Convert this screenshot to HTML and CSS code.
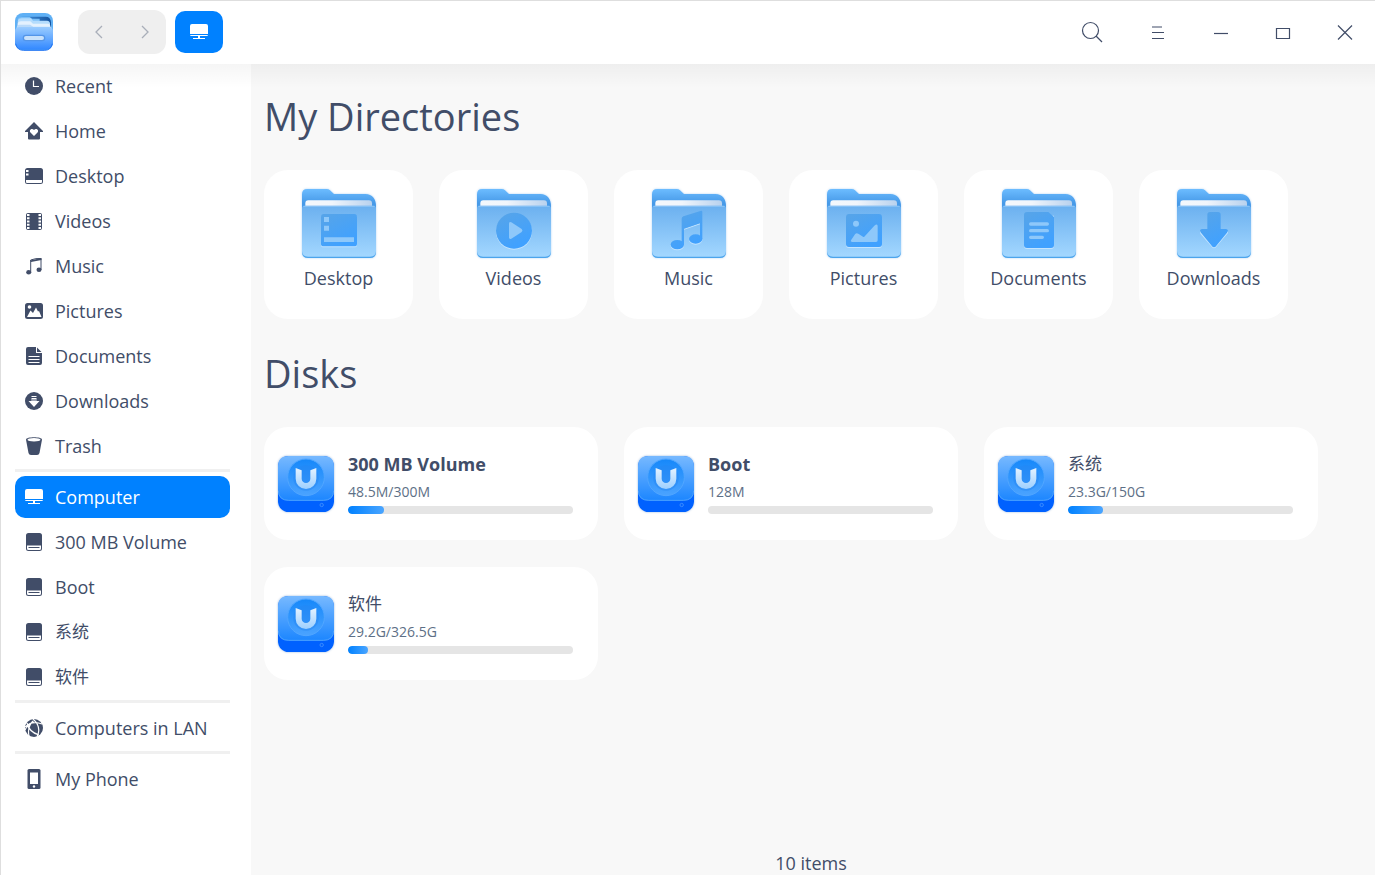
FILE: index.html
```html
<!DOCTYPE html>
<html lang="en">
<head>
<meta charset="utf-8">
<meta name="viewport" content="width=device-width, initial-scale=1">
<title>Computer</title>
<link rel="stylesheet" href="styles.css">
</head>
<body>
<svg class="defs" aria-hidden="true">
  <defs>
    <linearGradient id="back" x1="0" y1="0" x2="0" y2="1"><stop offset="0" stop-color="#6cbcff"/><stop offset=".6" stop-color="#479ae8"/><stop offset="1" stop-color="#479ae8"/></linearGradient>
    <linearGradient id="front" x1="0" y1="0" x2="0" y2="1"><stop offset="0" stop-color="#6bb0ef"/><stop offset="1" stop-color="#a3d7ff"/></linearGradient>
    <linearGradient id="paper" x1="0" y1="0" x2="1" y2="0"><stop offset="0" stop-color="#f4f8fc"/><stop offset=".4" stop-color="#f0f5fb"/><stop offset="1" stop-color="#b9d2ee"/></linearGradient>
    <linearGradient id="mark" gradientUnits="userSpaceOnUse" x1="85" y1="75" x2="130" y2="165"><stop offset="0" stop-color="#55a4ea"/><stop offset="1" stop-color="#40a1ff"/></linearGradient>
    <linearGradient id="lid" x1="0" y1="0" x2="0" y2="1"><stop offset="0" stop-color="#77b9ff"/><stop offset="1" stop-color="#1c86ff"/></linearGradient>
    <linearGradient id="dial" x1="0" y1="0" x2="0" y2="1"><stop offset="0" stop-color="#1688fa"/><stop offset="1" stop-color="#4ba3ff"/></linearGradient>
    <linearGradient id="emblem" gradientUnits="userSpaceOnUse" x1="0" y1="36" x2="0" y2="100"><stop offset="0" stop-color="#e4f2ff"/><stop offset="1" stop-color="#9ccfff"/></linearGradient>
    <linearGradient id="drawer" x1="0" y1="0" x2="0" y2="1"><stop offset="0" stop-color="#9accff"/><stop offset="1" stop-color="#3288ff"/></linearGradient>
    <linearGradient id="inside" x1="0" y1="0" x2="1" y2="0"><stop offset="0" stop-color="#4a9ce8"/><stop offset="1" stop-color="#15549f"/></linearGradient>
    <symbol id="folder" viewBox="0 0 222 207">
      <path fill="url(#back)" d="M0 70V16Q0 0 16 0H74Q80 0 84 4L96 15H190Q222 17 222 52V70Z"/>
      <rect x="10" y="34" width="200" height="34" rx="9" fill="url(#paper)"/>
      <path fill="#4ba4ec" d="M0 60H222V189Q222 207 204 207H18Q0 207 0 189Z"/>
      <path fill="url(#front)" d="M0 58Q0 50 8 50H214Q222 50 222 58V186Q222 203 204 203H18Q0 203 0 186Z"/>
      <path d="M4 52H218" stroke="#8cc4f6" stroke-width="3"/>
    </symbol>
    <symbol id="disk" viewBox="0 0 168 168">
      <rect width="168" height="168" rx="32" fill="#0061ff"/>
      <path fill="url(#lid)" d="M0 32Q0 0 32 0H136Q168 0 168 32V102Q168 134 136 134H32Q0 134 0 102Z"/>
      <path fill="none" stroke="#4aa0ff" stroke-width="3" d="M1 104Q2 133 32 133H136Q166 133 167 104"/>
      <circle cx="84" cy="64" r="55" fill="url(#dial)" stroke="#50a6ff" stroke-width="3"/>
      <circle cx="84" cy="66" r="38" fill="#2384f2" opacity=".45"/>
      <path fill="url(#emblem)" d="M53 36 71 43V68A13 13 0 0 0 97 68V43L115 36V68A31 31 0 0 1 53 68Z"/>
      <circle cx="131" cy="147" r="5" fill="none" stroke="#3a8cff" stroke-width="3"/>
    </symbol>
    <symbol id="i-drive" viewBox="0 0 18 18"><path fill-rule="evenodd" d="M3.500 0H14.500Q17 0 17 2.500V15.500Q17 18 14.500 18H3.500Q1 18 1 15.500V2.500Q1 0 3.500 0ZM2 12.500V15.500Q2 17 3.500 17H14.500Q16 17 16 15.500V12.500Z"/><rect x="3.500" y="14" width="11" height="1"/></symbol>
    <symbol id="i-computer" viewBox="0 0 18 18"><path d="M2 1H16Q18 1 18 3V11H0V3Q0 1 2 1ZM0 12H18Q18 13 16.500 13H1.500Q0 13 0 12ZM8 13H10V15H15V16H3V15H8Z"/></symbol>
  </defs>
</svg>
<div class="window">
  <header class="titlebar">
    <svg class="app-logo" viewBox="0 0 114 114" aria-hidden="true">
      <rect width="114" height="112" rx="24" fill="#5fb0f5"/>
      <path fill="url(#inside)" d="M6 28Q8 11 24 11H92Q107 11 108 28V60H6Z"/>
      <path fill="#7cc0f8" d="M8 54V20Q9 12 20 12H44L51 17H74V54Z"/>
      <path fill="#b4dcfd" d="M8 56V26Q9 16 20 16H48L54 23H96Q104 23 105 31V56Z"/>
      <path fill="#e3f1fe" d="M8 60V34Q8 25 18 25H46L54 32H98Q106 32 106 40V60Z"/>
      <path fill="#b9dafa" d="M5 60V44Q5 36 14 35H45L55 41H109V60Z"/>
      <path fill="url(#drawer)" d="M0 56Q0 42 14 42H100Q114 42 114 56V88Q114 110 90 110H24Q0 110 0 88Z"/>
      <path fill="none" stroke="#2375f2" stroke-width="3" d="M2 92Q6 112 26 112H88Q108 112 112 92"/>
      <rect x="25" y="67" width="64" height="16" rx="8" fill="#c8e1fb" stroke="#5395e8" stroke-width="4"/>
    </svg>
    <nav class="history" aria-label="History">
      <button type="button" aria-label="Back"><svg viewBox="0 0 8 14"><path d="M7 1 1 7l6 6"/></svg></button>
      <button type="button" aria-label="Forward"><svg viewBox="0 0 8 14"><path d="m1 1 6 6-6 6"/></svg></button>
    </nav>
    <button class="location" type="button" aria-label="Computer"><svg><use href="#i-computer"/></svg></button>
    <div class="controls">
      <button class="search" type="button" aria-label="Search"><svg viewBox="0 0 20 20"><circle cx="8.500" cy="8.500" r="8"/><path d="m14 14 6 6"/></svg></button>
      <button type="button" aria-label="Menu"><svg viewBox="0 0 20 20"><path d="M4 5h10M4 10.500h12M4 16.500h12"/></svg></button>
      <button type="button" aria-label="Minimize"><svg viewBox="0 0 20 20"><path d="M4 11.500h14"/></svg></button>
      <button type="button" aria-label="Maximize"><svg viewBox="0 0 20 20"><path d="M4.500 6.500h13v10h-13z"/></svg></button>
      <button type="button" aria-label="Close"><svg viewBox="0 0 20 20"><path d="m4 3.500 14 14M18 3.500l-14 14"/></svg></button>
    </div>
  </header>
  <div class="body">
    <nav class="sidebar" aria-label="Places">
      <a href="#"><svg viewBox="0 0 18 18"><circle cx="9" cy="9" r="9"/><path class="cut" d="M8.500 3.500V9.500H14"/></svg>Recent</a>
      <a href="#"><svg viewBox="0 0 18 18"><path d="M9 0 18 9V10H15V16.500Q15 17.500 14 17.500H4Q3 17.500 3 16.500V10H0V9Z"/><path class="hole" d="M9 14 5.500 10.500C3.500 8 7 5.500 9 8 11 5.500 14.500 8 12.500 10.500Z"/></svg>Home</a>
      <a href="#"><svg viewBox="0 0 18 18"><rect y="1" width="18" height="16" rx="2.500"/><path class="hole" d="M1 3H3.500V5H1ZM1 6.500H3.500V8.500H1ZM1 13H17V15Q17 16 16 16H2Q1 16 1 15Z"/></svg>Desktop</a>
      <a href="#"><svg viewBox="0 0 18 18"><rect x="1" y="1" width="16" height="17" rx="2"/><path class="hole" d="M2 2H4.500V4H2ZM2 5.250H4.500V7.250H2ZM2 8.500H4.500V10.500H2ZM2 11.750H4.500V13.750H2ZM2 15H4.500V17H2ZM13.500 2H16V4H13.500ZM13.500 5.250H16V7.250H13.500ZM13.500 8.500H16V10.500H13.500ZM13.500 11.750H16V13.750H13.500ZM13.500 15H16V17H13.500Z"/></svg>Videos</a>
      <a href="#"><svg viewBox="0 0 18 18"><ellipse cx="3.700" cy="15.200" rx="2.500" ry="2.300"/><ellipse cx="14" cy="12.700" rx="2.500" ry="2.300"/><path class="line" d="M5.700 15.500V3Q11 1 16 1.500V13"/><path d="M5 3.500 16.500 1V3L6 5Z"/></svg>Music</a>
      <a href="#"><svg viewBox="0 0 18 18"><rect y="1" width="18" height="16" rx="2.500"/><circle class="hole" cx="4.500" cy="5" r="1.800"/><path class="hole" d="M2 15 5.500 8.500 8 11 11 5.500 13 9.500 14 9 16.500 15Z"/></svg>Pictures</a>
      <a href="#"><svg viewBox="0 0 18 18"><path d="M3 0H11V6H17V16Q17 18 15 18H3Q1 18 1 16V2Q1 0 3 0ZM12 .500 16.500 5H12Z"/><path class="cut" d="M3.500 9.500H14.500M3.500 12.500H14.500M3.500 15.500H14.500"/></svg>Documents</a>
      <a href="#"><svg viewBox="0 0 18 18"><circle cx="9" cy="9" r="9"/><path class="hole" d="M6.500 4H11.500V5H6.500ZM6.500 6H11.500V9H14.500L9 15 3.500 9H6.500Z"/><path d="M6.500 7.500H11.500V8.500H6.500Z"/></svg>Downloads</a>
      <a href="#"><svg viewBox="0 0 18 18"><path d="M1 2.500C1-.5 17-.5 17 2.500L14.500 16Q14 18 12 18H6Q4 18 3.500 16Z"/><ellipse class="hole" cx="9" cy="2.800" rx="6.500" ry="1.700"/></svg>Trash</a>
      <hr>
      <a class="current" href="#" aria-current="page"><svg><use href="#i-computer"/></svg>Computer</a>
      <a href="#"><svg><use href="#i-drive"/></svg>300 MB Volume</a>
      <a href="#"><svg><use href="#i-drive"/></svg>Boot</a>
      <a href="#" lang="zh"><svg><use href="#i-drive"/></svg>系统</a>
      <a href="#" lang="zh"><svg><use href="#i-drive"/></svg>软件</a>
      <hr>
      <a href="#"><svg viewBox="0 0 18 18"><circle cx="9" cy="9" r="9"/><path class="cut" d="M8 0Q17 8 12 18M0 8Q7 1 17 5M2 4Q4 13 14 16M8 2Q2 8 4 17M0 11Q3 5 9 3"/></svg>Computers in LAN</a>
      <hr>
      <a href="#"><svg viewBox="0 0 18 20" class="tall"><rect x="2.500" width="13" height="20" rx="1.500"/><path class="hole" d="M5 3.500H13V15H5Z"/><circle class="hole" cx="9" cy="17.500" r="1.200"/></svg>My Phone</a>
    </nav>
    <main class="content">
      <h1>My Directories</h1>
      <div class="folders">
        <a class="folder" href="#"><svg viewBox="0 0 222 207"><use href="#folder"/><rect class="glow" x="57" y="78" width="108" height="97" rx="8"/><rect class="mark" x="57" y="75" width="108" height="97" rx="8"/><path class="light" d="M66 84H81V99H66ZM66 110H81V125H66ZM66 145H156V159H66Z"/></svg>Desktop</a>
        <a class="folder" href="#"><svg viewBox="0 0 222 207"><use href="#folder"/><circle class="glow" cx="111" cy="128" r="54"/><circle class="mark" cx="111" cy="125" r="54"/><path class="light" d="M96 104Q96 96 103 100L134 120Q139 125 134 129L103 149Q96 152 96 145Z"/></svg>Videos</a>
        <a class="folder" href="#"><svg viewBox="0 0 222 207"><use href="#folder"/><g class="glow"><ellipse cx="76" cy="170" rx="20" ry="14"/><ellipse cx="131" cy="153" rx="20" ry="14"/><path d="M96 122 144 106V103L96 119Z"/></g><g class="mark"><ellipse cx="76" cy="167" rx="20" ry="14"/><ellipse cx="131" cy="150" rx="20" ry="14"/><path d="M89 89Q89 84 94 82L145 66Q151 64 151 69V150H144V103L96 119V167H89Z"/></g></svg>Music</a>
        <a class="folder" href="#"><svg viewBox="0 0 222 207"><use href="#folder"/><rect class="glow" x="57" y="78" width="108" height="99" rx="9"/><rect class="mark" x="57" y="75" width="108" height="99" rx="9"/><path class="light" d="M78 104a9 9 0 1 0 18 0a9 9 0 1 0-18 0ZM72 154 84 136Q88 130 94 134L108 143Q111 145 114 141L142 110Q152 102 152 112V154Q152 159 147 159H75Q69 158 72 154Z"/></svg>Pictures</a>
        <a class="folder" href="#"><svg viewBox="0 0 222 207"><use href="#folder"/><path class="glow" d="M66 80H156V171Q156 180 147 180H75Q66 180 66 171Z"/><path class="mark" d="M75 69H139L156 84V168Q156 177 147 177H75Q66 177 66 168V78Q66 69 75 69Z"/><path class="rule" d="M86 105H136M86 125H136M86 145H121"/></svg>Documents</a>
        <a class="folder" href="#"><svg viewBox="0 0 222 207"><use href="#folder"/><path class="glow" d="M69 127H153V132L118 173Q111 183 104 173L70 134Z"/><path class="mark" d="M99 69H123Q131 69 131 77V120H147Q157 122 150 131L118 170Q111 179 104 170L72 131Q65 122 75 120H91V77Q91 69 99 69Z"/></svg>Downloads</a>
      </div>
      <h1>Disks</h1>
      <div class="disks">
        <a class="disk" href="#"><svg><use href="#disk"/></svg><span class="info"><strong>300 MB Volume</strong><small>48.5M/300M</small><progress value="48.5" max="300" aria-label="300 MB Volume usage"></progress></span></a>
        <a class="disk" href="#"><svg><use href="#disk"/></svg><span class="info"><strong>Boot</strong><small>128M</small><progress value="0" max="128" aria-label="Boot usage"></progress></span></a>
        <a class="disk" href="#"><svg><use href="#disk"/></svg><span class="info"><strong lang="zh">系统</strong><small>23.3G/150G</small><progress value="23.3" max="150" aria-label="系统 usage"></progress></span></a>
        <a class="disk" href="#"><svg><use href="#disk"/></svg><span class="info"><strong lang="zh">软件</strong><small>29.2G/326.5G</small><progress value="29.2" max="326.5" aria-label="软件 usage"></progress></span></a>
      </div>
      <footer class="status">10 items</footer>
    </main>
  </div>
</div>
</body>
</html>
```

FILE: styles.css
```css
* { box-sizing: border-box; }

body {
  margin: 0;
  color: #414d68;
  font: 18px/24px "Open Sans", "Noto Sans CJK SC", sans-serif;
}

a { color: inherit; text-decoration: none; }

button {
  display: flex;
  align-items: center;
  justify-content: center;
  padding: 0;
  border: 0;
  background: none;
  color: inherit;
}

.defs { position: absolute; width: 0; height: 0; }

.window {
  display: flex;
  flex-direction: column;
  min-height: 100vh;
  border-top: 1px solid #dedede;
  border-left: 1px solid #dedede;
  background: #fff;
}

.titlebar {
  display: flex;
  align-items: center;
  height: 63px;
  padding: 0 0 1px 14px;
}

.app-logo { width: 38px; height: 38px; margin-right: 25px; }

.history {
  display: flex;
  width: 88px;
  height: 44px;
  margin-right: 9px;
  padding: 0 20px 0 16px;
  justify-content: space-between;
  border-radius: 12px;
  background: #efefef;
}

.history svg { width: 8px; height: 14px; fill: none; stroke: #a9aeb9; stroke-width: 1.3; }
.history { padding: 0 17px; }

.location { width: 48px; height: 42px; border-radius: 10px; background: #0081ff; }
.location svg { width: 18px; height: 18px; fill: #fff; }

.controls { display: flex; margin-left: auto; }
.controls button { width: 62px; height: 40px; }
.controls .search { margin-right: 4px; }
.controls svg { width: 20px; height: 20px; fill: none; stroke: #414d68; stroke-width: 1.2; overflow: visible; }

.body { display: flex; flex: 1; }

.sidebar {
  display: flex;
  flex-direction: column;
  flex: none;
  width: 250px;
  padding: 1px 21px 24px 14px;
  background: linear-gradient(rgba(0, 0, 0, .04), transparent 24px) #fff;
}

.sidebar a {
  display: flex;
  align-items: center;
  gap: 12px;
  height: 42px;
  padding-left: 10px;
  border-radius: 10px;
}

.sidebar a + a { margin-top: 3px; }
.sidebar hr { width: 100%; height: 3px; margin: 2px 0 4px; border: 0; background: #f0f0f0; }
.sidebar svg { width: 18px; height: 18px; fill: #414d68; }
.sidebar .tall { height: 20px; }
.sidebar .cut { fill: none; stroke: #fff; stroke-width: 1.2; }
.sidebar .hole { fill: #fff; }
.sidebar .line { fill: none; stroke: #414d68; stroke-width: 1; }
.sidebar .current { background: #0081ff; color: #fff; }
.sidebar .current svg { fill: #fff; }
.sidebar a:lang(zh) { font-size: 17px; }

.content {
  display: flex;
  flex-direction: column;
  flex: 1;
  min-width: 0;
  padding-left: 13px;
  background: linear-gradient(rgba(0, 0, 0, .04), transparent 24px) #f8f8f8;
}

h1 { margin: 0; padding: 26px 0 28px; font-size: 38px; font-weight: 400; line-height: 52px; }

.folders, .disks { display: flex; flex-wrap: wrap; gap: 27px 26px; }
.folders { margin-bottom: 2px; }

.folder {
  display: flex;
  flex-direction: column;
  align-items: center;
  gap: 8px;
  width: 149px;
  min-height: 149px;
  padding-top: 19px;
  border-radius: 24px;
  background: #fff;
}

.folder svg { width: 74px; height: 69px; filter: drop-shadow(0 0 1px rgba(70, 150, 230, .4)); }
.folder .mark { fill: url(#mark); }
.folder .glow { fill: #c3e4ff; }
.folder .light { fill: #8ec8fa; }
.folder .rule { fill: none; stroke: #8ec8fa; stroke-width: 10; stroke-linecap: round; }

.disk {
  display: flex;
  align-items: center;
  gap: 14px;
  width: 334px;
  padding: 26px 25px 26px 14px;
  border-radius: 24px;
  background: #fff;
}

.disk svg { flex: none; width: 56px; height: 56px; filter: drop-shadow(0 0 1px rgba(0, 80, 180, .4)); }
.info { display: flex; flex-direction: column; flex: 1; }
.info strong { margin-bottom: 7px; line-height: 22px; }
.info strong:lang(zh) { font-size: 17px; font-weight: 400; }
.info small { margin-bottom: 4px; color: #5d6f86; font-size: 14px; line-height: 20px; }

progress {
  display: block;
  width: 100%;
  height: 8px;
  border: 0;
  border-radius: 4px;
  overflow: hidden;
  appearance: none;
  background: #e5e5e5;
}

progress::-webkit-progress-bar { background: #e5e5e5; }
progress::-webkit-progress-value { border-radius: 4px; background: linear-gradient(90deg, #0081ff, #4aa5ff); }

.status { margin-top: auto; padding-right: 17px; text-align: center; }
```
